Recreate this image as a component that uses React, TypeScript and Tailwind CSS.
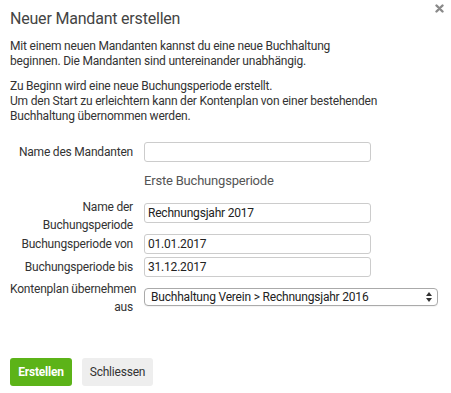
import React from "react";

const font = { fontFamily: "Roboto, 'Liberation Sans', sans-serif" };

const Row = ({
  label,
  children,
  className = "",
  top = false,
}: {
  label: React.ReactNode;
  children: React.ReactNode;
  className?: string;
  top?: boolean;
}) => (
  <div className={`flex ${top ? "items-start" : "items-center"} ${className}`}>
    <div className="w-[123px] shrink-0 whitespace-nowrap text-right text-[12px] leading-[18px] text-[#333]">
      {label}
    </div>
    <div className="ml-[11px]">{children}</div>
  </div>
);

const Input = ({ value = "" }: { value?: string }) => (
  <input
    readOnly
    value={value}
    className="block h-[20px] w-[227px] rounded-[3px] border border-[#ccc] bg-white px-[3px] text-[12px] text-[#222] outline-none"
  />
);

const App = () => {
  return (
    <div
      className="h-[393px] w-[451px] overflow-hidden bg-white px-[10px] pt-[8px] text-[#333] tracking-[-0.2px]"
      style={font}
    >
      <div className="flex items-start justify-between">
        <h1 className="text-[16px] leading-[22px] text-[#444]">
          Neuer Mandant erstellen
        </h1>
        <svg
          width="9"
          height="9"
          viewBox="0 0 9 9"
          className="-mt-[4px] mr-[-3px]"
        >
          <path
            d="M1.5 1.5L7.5 7.5M7.5 1.5L1.5 7.5"
            stroke="#8a8a8a"
            strokeWidth="2.4"
            strokeLinecap="round"
          />
        </svg>
      </div>

      <div className="mt-[9px] text-[12px] leading-[15px]">
        <p>
          Mit einem neuen Mandanten kannst du eine neue Buchhaltung
          <br />
          beginnen. Die Mandanten sind untereinander unabhängig.
        </p>
        <p className="mt-[10px]">
          Zu Beginn wird eine neue Buchungsperiode erstellt.
          <br />
          Um den Start zu erleichtern kann der Kontenplan von einer bestehenden
          <br />
          Buchhaltung übernommen werden.
        </p>
      </div>

      <Row label="Name des Mandanten" className="mt-[18px]">
        <Input />
      </Row>

      <div className="ml-[134px] mt-[10px] text-[13px] leading-[18px] text-[#555]">
        Erste Buchungsperiode
      </div>

      <Row
        top
        className="mt-[8px]"
        label={
          <>
            Name der
            <br />
            Buchungsperiode
          </>
        }
      >
        <div className="mt-[5px]">
          <Input value="Rechnungsjahr 2017" />
        </div>
      </Row>
      <Row label="Buchungsperiode von">
        <Input value="01.01.2017" />
      </Row>
      <Row label="Buchungsperiode bis" className="mt-[3px]">
        <Input value="31.12.2017" />
      </Row>

      <Row
        top
        className="mt-[3px]"
        label={
          <>
            Kontenplan übernehmen
            <br />
            aus
          </>
        }
      >
        <div className="mt-[8px] flex h-[18px] w-[294px] items-center justify-between rounded-[4px] border border-[#aaa] bg-white pl-[6px] pr-[5px] text-[12px] text-[#222] shadow-[0_1px_1px_rgba(0,0,0,0.05)]">
          <span>Buchhaltung Verein &gt; Rechnungsjahr 2016</span>
          <svg width="6" height="10" viewBox="0 0 6 10">
            <path d="M3 0L6 4H0z" fill="#333" />
            <path d="M3 10L6 6H0z" fill="#333" />
          </svg>
        </div>
      </Row>

      <div className="mt-[42px] flex gap-[10px]">
        <button className="h-[28px] w-[62px] rounded-[3px] bg-[#5cb318] text-[12px] font-bold text-white">
          Erstellen
        </button>
        <button className="h-[28px] w-[71px] rounded-[3px] bg-[#eeeeee] text-[12px] text-[#333]">
          Schliessen
        </button>
      </div>
    </div>
  );
};

export default App;
